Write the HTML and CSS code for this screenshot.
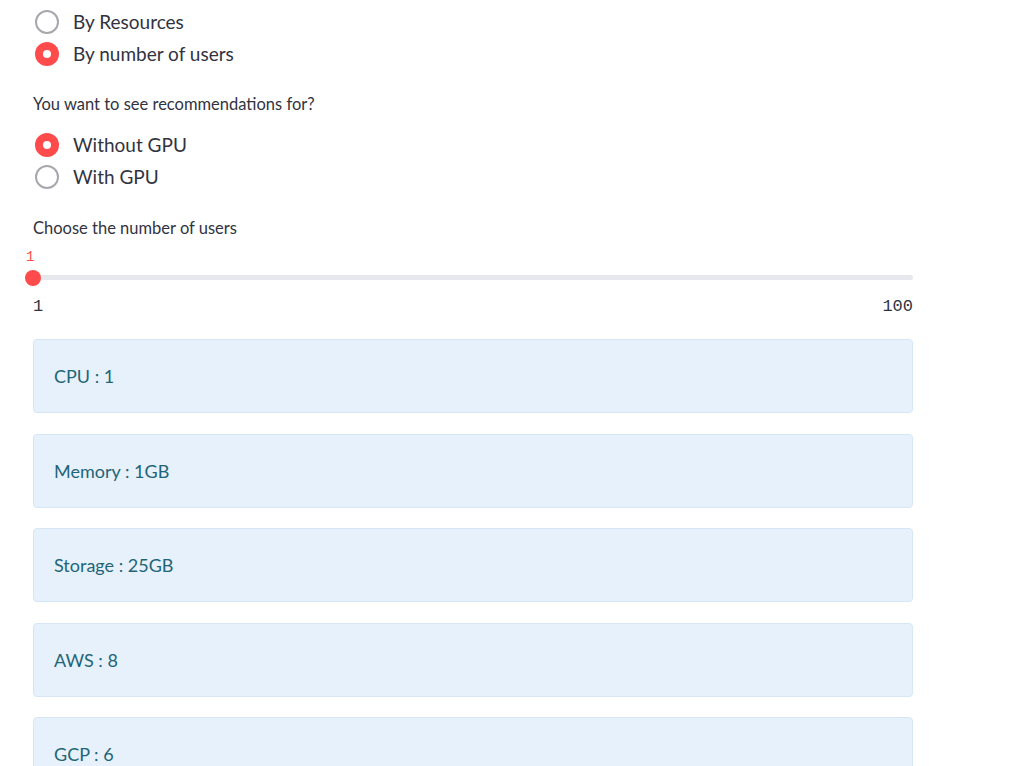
FILE: index.html
```html
<!DOCTYPE html>
<html>
<head>
<meta charset="utf-8">
<link rel="stylesheet" href="styles.css">
</head>
<body>
<main class="main">
  <div class="radio-group first">
    <div class="radio-opt"><span class="radio"></span><span class="opt-text">By Resources</span></div>
    <div class="radio-opt"><span class="radio on"></span><span class="opt-text">By number of users</span></div>
  </div>

  <div class="widget-label">You want to see recommendations for?</div>
  <div class="radio-group second">
    <div class="radio-opt"><span class="radio on"></span><span class="opt-text">Without GPU</span></div>
    <div class="radio-opt"><span class="radio"></span><span class="opt-text">With GPU</span></div>
  </div>

  <div class="widget-label tight">Choose the number of users</div>
  <div class="slider">
    <div class="slider-value">1</div>
    <div class="track"><span class="thumb"></span></div>
    <div class="ticks"><span>1</span><span>100</span></div>
  </div>

  <div class="alerts">
    <div class="alert">CPU : 1</div>
    <div class="alert">Memory : 1GB</div>
    <div class="alert">Storage : 25GB</div>
    <div class="alert">AWS : 8</div>
    <div class="alert">GCP : 6</div>
  </div>
</main>
</body>
</html>
```

FILE: styles.css
```css
html, body {
  margin: 0;
  padding: 0;
  background: #ffffff;
}
body {
  font-family: "Lato", "Open Sans", sans-serif;
  color: #31333f;
  overflow: hidden;
  height: 766px;
}
.main {
  width: 880px;
  margin-left: 33px;
  display: flex;
  flex-direction: column;
}
.radio-group {
  display: flex;
  flex-direction: column;
  gap: 8px;
  margin-bottom: 28px;
}
.radio-group.first {
  margin-top: 10px;
}
.radio-group.second {
  margin-bottom: 29px;
}
.radio-opt {
  display: flex;
  align-items: center;
  gap: 14px;
  height: 24px;
  margin-left: 2px;
}
.radio {
  width: 24px;
  height: 24px;
  box-sizing: border-box;
  border-radius: 50%;
  border: 2px solid #a6a8ae;
  background: #fff;
  display: flex;
  align-items: center;
  justify-content: center;
}
.radio.on {
  border: none;
  background: #ff4b4b;
}
.radio.on::after {
  content: "";
  width: 8px;
  height: 8px;
  border-radius: 50%;
  background: #fff;
}
.opt-text {
  font-size: 19px;
  line-height: 24px;
}
.widget-label {
  font-size: 16.5px;
  line-height: 20px;
  margin-bottom: 19px;
}
.widget-label.tight {
  margin-bottom: 11px;
}
.slider {
  display: flex;
  flex-direction: column;
}
.slider-value {
  font-family: "Liberation Mono", monospace;
  color: #ff4b4b;
  font-size: 14px;
  line-height: 16px;
  margin-left: -7px;
}
.track {
  position: relative;
  height: 5px;
  background: #e6e8ee;
  border-radius: 3px;
  margin-top: 10px;
}
.thumb {
  position: absolute;
  left: -8px;
  top: -5px;
  width: 16px;
  height: 16px;
  border-radius: 50%;
  background: #ff4b4b;
}
.ticks {
  display: flex;
  justify-content: space-between;
  font-family: "Liberation Mono", monospace;
  font-size: 17px;
  line-height: 20px;
  margin-top: 17px;
}
.alerts {
  display: flex;
  flex-direction: column;
  gap: 20.5px;
  margin-top: 22px;
}
.alert {
  box-sizing: border-box;
  height: 74px;
  padding: 0 20px;
  display: flex;
  align-items: center;
  background: #e6f1fc;
  border: 1px solid #d6e6f5;
  border-radius: 4px;
  color: #1f6577;
  font-size: 18px;
  flex-shrink: 0;
}
```
